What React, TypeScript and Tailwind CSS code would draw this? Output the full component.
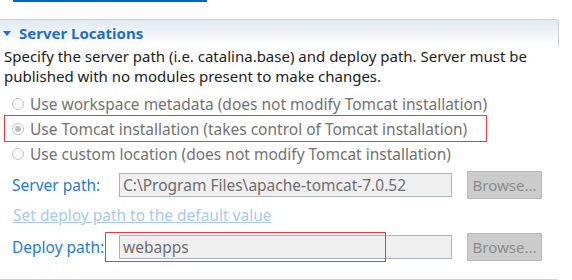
const font = "font-['Noto_Sans','Open_Sans',sans-serif]";

const Radio = ({ checked, label }: { checked?: boolean; label: string }) => (
  <div className="flex items-center h-[25px] pl-[12px]">
    <span className="w-[12px] h-[12px] rounded-full border border-[#c4c4c4] bg-[#fbfbfb] flex items-center justify-center">
      {checked && <span className="w-[6px] h-[6px] rounded-full bg-[#bcbcbc]" />}
    </span>
    <span className="ml-[6px] text-[15.5px] text-[#727272]">{label}</span>
  </div>
);

const PathRow = ({ label, value }: { label: string; value: string }) => (
  <div className="flex items-center h-[28px]">
    <span className="w-[119px] pl-[12px] text-[15.5px] text-[#1f7bd8]">{label}</span>
    <div className="w-[333px] h-[24px] border border-[#a9b3bf] bg-[#efefef] pl-[3px] leading-[22px] text-[15.5px] text-[#6e6e6e]">
      {value}
    </div>
    <button className="ml-[15px] w-[75px] h-[28px] border border-[#b9b9b9] bg-[#cbcbcb] text-[#8c8c8c] text-center">
      Browse...
    </button>
  </div>
);

export default function App() {
  return (
    <div className={`w-[572px] h-[280px] overflow-hidden bg-white text-[15px] leading-[20px] ${font}`}>
      {/* underline of the link scrolled out above */}
      <div className="h-[19px]">
        <div className="ml-[13px] w-[194px] h-[2px] bg-[#0066cc]" />
      </div>

      {/* Server Locations section */}
      <div className="w-[559px] border-t border-r border-[#c5d1de] rounded-tr-[3px]">
        <div className="h-[26px] flex items-center bg-gradient-to-b from-[#e2e8f1] to-white">
          <svg width="8" height="5" viewBox="0 0 8 5" className="ml-[3px]">
            <path d="M0 0h8L4 5z" fill="#1d6fc6" />
          </svg>
          <span className="ml-[8px] font-bold text-[15px] text-[#1f6fc5]">Server Locations</span>
        </div>
      </div>
      <div className="pl-[4px] pr-[20px] text-[#1b1b1b]">
        Specify the server path (i.e. catalina.base) and deploy path. Server must be published with no modules present to make changes.
      </div>

      <div className="mt-[5px]">
        <Radio label="Use workspace metadata (does not modify Tomcat installation)" />
        <div className="ml-[4px] w-[483px] border border-[#ee3a3a] -my-[1px]">
          <div className="-ml-[5px]">
            <Radio checked label="Use Tomcat installation (takes control of Tomcat installation)" />
          </div>
        </div>
        <Radio label="Use custom location (does not modify Tomcat installation)" />
      </div>

      <div className="mt-[5px]">
        <PathRow label="Server path:" value="C:\Program Files\apache-tomcat-7.0.52" />
      </div>

      <div className="mt-[6px] pl-[13px] text-[15.5px] text-[#a7caee] underline h-[22px]">Set deploy path to the default value</div>

      <div className="mt-[6px] relative">
        <PathRow label="Deploy path:" value="webapps" />
        <div className="absolute left-[105px] -top-[1px] w-[281px] h-[30px] border border-[#ee3a3a]" />
      </div>

      <div className="mt-[18px] w-[559px] h-[10px] border-t border-r border-[#c5d1de] rounded-tr-[3px] bg-[#e6ecf4]" />
    </div>
  );
}
